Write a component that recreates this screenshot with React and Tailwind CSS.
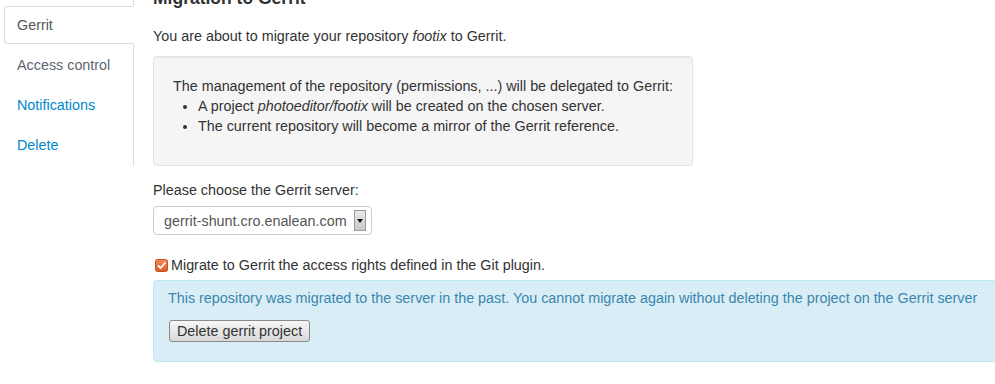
import React from "react";

const NavItem = ({ label, active, muted }) => {
  if (active) {
    return (
      <div className="ml-[4px] -mr-px mb-[2px] h-[38px] flex items-center pl-[12px] bg-white border border-[#ddd] border-r-white rounded-l-[4px] text-[#555]">
        {label}
      </div>
    );
  }
  return (
    <div
      className={`ml-[4px] mb-[2px] h-[38px] flex items-center pl-[13px] ${
        muted ? "text-[#5b6671]" : "text-[#0088cc]"
      }`}
    >
      {label}
    </div>
  );
};

const CheckedBox = () => (
  <svg width="13" height="13" viewBox="0 0 13 13" className="shrink-0">
    <defs>
      <linearGradient id="cb" x1="0" y1="0" x2="0" y2="1">
        <stop offset="0" stopColor="#f58a5b" />
        <stop offset="1" stopColor="#e05a22" />
      </linearGradient>
    </defs>
    <rect x="0.5" y="0.5" width="12" height="12" rx="2" fill="url(#cb)" stroke="#c4521e" />
    <path d="M3 6.5 L5.5 9 L10.5 3.5" fill="none" stroke="#fff" strokeWidth="1.8" />
  </svg>
);

export default function App() {
  return (
    <div
      className="w-[995px] h-[384px] overflow-hidden bg-white text-[14.35px] leading-[20px] text-[#333] flex"
      style={{ fontFamily: '"Liberation Sans", Arial, sans-serif' }}
    >
      <div className="w-[134px] shrink-0 self-start h-[166px] border-r border-[#ddd] pt-[6px]">
        <NavItem label="Gerrit" active />
        <NavItem label="Access control" muted />
        <NavItem label="Notifications" />
        <NavItem label="Delete" />
      </div>

      <div className="ml-[19px] flex-1 min-w-0">
        <h3 className="mt-[-12px] text-[17.5px] leading-[20px] font-bold text-[#333]">
          Migration to Gerrit
        </h3>
        <p className="mt-[18px] mb-[10px]">
          You are about to migrate your repository <em>footix</em> to Gerrit.
        </p>

        <div className="w-[540px] bg-[#f5f5f5] border border-[#e3e3e3] rounded-[4px] p-[19px] shadow-[inset_0_1px_1px_rgba(0,0,0,0.05)]">
          The management of the repository (permissions, ...) will be delegated to Gerrit:
          <ul className="list-disc ml-[25px] mb-[10px]">
            <li>
              A project <em>photoeditor/footix</em> will be created on the chosen server.
            </li>
            <li>The current repository will become a mirror of the Gerrit reference.</li>
          </ul>
        </div>

        <div className="mt-[14px]">Please choose the Gerrit server:</div>
        <div className="mt-[6px] w-[219px] h-[29px] border border-[#ccc] rounded-[4px] flex items-center pl-[10px] pr-[5px] text-[#555]">
          <span className="flex-1">gerrit-shunt.cro.enalean.com</span>
          <span className="w-[12px] h-[21px] bg-gradient-to-b from-[#e8e8e8] to-[#c9c9c9] border border-[#9a9a9a] flex items-center justify-center">
            <svg width="6" height="4" viewBox="0 0 6 4">
              <path d="M0 0 H6 L3 4 Z" fill="#111" />
            </svg>
          </span>
        </div>

        <label className="mt-[20px] flex items-center gap-[3px] ml-[2px]">
          <CheckedBox />
          <span>Migrate to Gerrit the access rights defined in the Git plugin.</span>
        </label>

        <div className="mt-[5px] -mr-[40px] bg-[#d9edf7] border border-[#bce8f1] rounded-[4px] pt-[7px] pb-[19px] pl-[14px] text-[#3a87ad]">
          <div>
            This repository was migrated to the server in the past. You cannot migrate again
            without deleting the project on the Gerrit server
          </div>
          <button className="mt-[12px] ml-px h-[22px] px-[7px] border border-[#8a8a8a] rounded-[3px] bg-gradient-to-b from-[#f7f7f7] to-[#d8d8d8] text-[#333] text-[14.35px] leading-[18px]">
            Delete gerrit project
          </button>
        </div>
      </div>
    </div>
  );
}
